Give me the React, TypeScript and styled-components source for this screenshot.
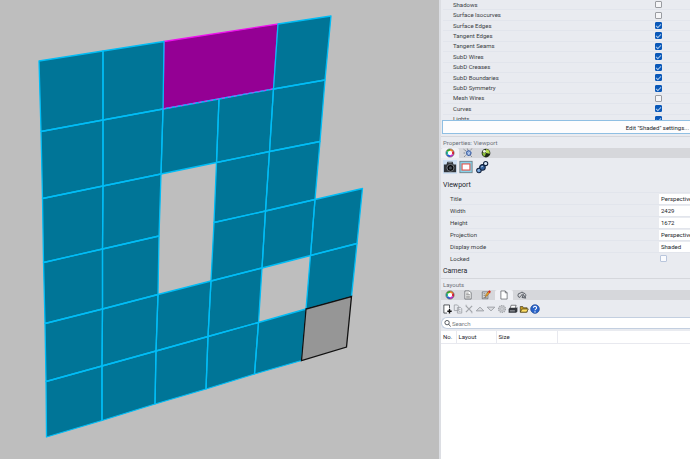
import React from "react";
import styled, { createGlobalStyle, css } from "styled-components";

const GlobalStyle = createGlobalStyle`
  * { box-sizing: border-box; }
  html, body, #root { height: 100%; }
  body { margin: 0; overflow: hidden; background: #bebebe; }
  body, button, input { font-family: Roboto, "Open Sans", sans-serif; font-size: 6px; color: #3a3d44; }
`;

const Window = styled.main`
  display: flex;
  height: 100vh;
  overflow: hidden;
`;

const Scene = styled.section`
  flex: 0 0 439px;
  overflow: hidden;
  background: #bebebe;
  svg { display: block; }
`;

const Sidebar = styled.aside`
  flex: 1;
  min-width: 0;
  display: flex;
  flex-direction: column;
  background: #e9ebf0;
  border-left: 2px solid #dcdee3;
  white-space: nowrap;
`;

const DisplayList = styled.div`
  height: 120px;
  flex: none;
  overflow: hidden;
  padding-left: 2px;
`;

const DisplayRows = styled.div`
  height: 125px;
  display: grid;
  grid-template-rows: repeat(12, 1fr);
`;

const DisplayRow = styled.label`
  display: grid;
  grid-template-columns: 202px 1fr;
  align-items: center;
  padding-left: 10px;
  min-height: 0;
  line-height: 8px;
  border-bottom: 1px solid #e2e5ec;
`;

const Check = styled.input`
  appearance: none;
  width: 7px;
  height: 7px;
  margin: 0;
  justify-self: start;
  border: 1px solid #9a9ca1;
  border-radius: 1px;
  background: #f6f6f8;
  display: grid;
  place-items: center;
  &:checked { background: #0a58b8; border-color: #0a58b8; }
  &:checked::after {
    content: "";
    width: 4px;
    height: 2px;
    border: solid #a9c8ec;
    border-width: 0 0 1px 1px;
    transform: rotate(-45deg);
  }
`;

const LockCheck = styled(Check)`
  margin-left: 1px;
  border-color: #b9c6dc;
  background: #fafbfe;
`;

const EditButton = styled.button`
  flex: none;
  height: 14px;
  margin: 0 0 2px 1px;
  padding: 0 1px 0 0;
  border: 1px solid #8fbfe3;
  border-right: 0;
  background: #fdfdfe;
  text-align: right;
  color: #22242a;
`;

const PanelTitle = styled.h2`
  flex: none;
  margin: 0;
  padding-left: 2px;
  height: 12px;
  line-height: 11px;
  font-size: 6px;
  font-weight: 400;
  color: #6c7078;
  border-top: 1px solid #d5d7dc;
`;

const TabBar = styled.div`
  flex: none;
  display: flex;
  height: 10px;
  background: #d6d7db;
`;

const Tab = styled.button<{ $active?: boolean }>`
  width: 18px;
  height: 10px;
  padding: 0;
  border: 0;
  border-radius: 2px 2px 0 0;
  background: ${(p) => (p.$active ? "#f0f1f5" : "transparent")};
  display: grid;
  place-items: center;
`;

const Tools = styled.div<{ $large?: boolean }>`
  flex: none;
  display: flex;
  align-items: center;
  height: 17px;
  ${(p) => p.$large && css`gap: 2px; padding-left: 2px; height: 18px;`}
`;

const Tool = styled.button<{ $large?: boolean; $selected?: boolean }>`
  width: ${(p) => (p.$large ? 14 : 11)}px;
  height: ${(p) => (p.$large ? 14 : 11)}px;
  padding: 0;
  border: 0;
  background: ${(p) => (p.$selected ? "#cfe0f3" : "transparent")};
  display: grid;
  place-items: center;
`;

const Section = styled.h3`
  flex: none;
  margin: 0;
  padding-left: 2px;
  height: 14px;
  line-height: 14px;
  font-size: 7px;
  font-weight: 400;
  color: #24272d;
`;

const Properties = styled.div`
  flex: none;
  height: 102px;
  display: flex;
  flex-direction: column;
  justify-content: flex-end;
`;

const Field = styled.label`
  display: grid;
  grid-template-columns: 209px 1fr;
  align-items: center;
  height: 12px;
  margin-left: 9px;
  border-top: 1px solid #e2e5ec;
`;

const ValueInput = styled.input`
  min-width: 0;
  width: 100%;
  height: 10px;
  padding: 0 0 0 2px;
  border: 0;
  background: #fff;
  color: #24272d;
`;

const Search = styled.label`
  flex: none;
  display: flex;
  align-items: center;
  height: 12px;
  padding-left: 2px;
  margin-bottom: 2px;
  background: #fff;
  border: 1px solid #c3cfe0;
  border-right: 0;
  border-radius: 6px 0 0 6px;
`;

const SearchInput = styled.input`
  flex: 1;
  min-width: 0;
  height: 9px;
  padding: 0 1px;
  border: 0;
  background: transparent;
  &::placeholder { color: #777b82; opacity: 1; }
`;

const TableArea = styled.div`
  flex: 1;
  background: #fff;
`;

const Table = styled.table`
  width: 100%;
  table-layout: fixed;
  border-collapse: collapse;
  th {
    height: 12px;
    padding: 0 0 0 2px;
    line-height: 10px;
    text-align: left;
    font-weight: 400;
    color: #24272d;
    border: solid #e8e9ef;
    border-width: 0 1px 1px 0;
  }
  th:last-child { border-right: 0; }
`;

type Point = [number, number];
const grid: Point[][] = [
  [[39, 61], [103, 51], [164, 41.5], [222, 33], [278, 24], [331, 16]],
  [[41, 131.5], [103, 120], [163, 109], [219, 99], [273.5, 89], [325, 80]],
  [[42.5, 198.5], [103, 186], [161, 174], [216.5, 162.5], [269.5, 151.5], [320, 141.5]],
  [[43.5, 262.5], [102.5, 249], [159, 236], [214, 222.5], [265.5, 211], [315, 199.5], [362.5, 188.5]],
  [[45, 323.5], [102.5, 309], [158, 294.5], [211, 281], [262, 268], [310.5, 255.5], [357, 243.5]],
  [[46, 381.5], [102, 366], [156, 351], [208, 336.5], [258.5, 322.5], [306, 309], [351.5, 296.5]],
  [[46.5, 437], [102, 420.5], [155, 404], [206, 389], [254.5, 374], [301.5, 360.5], [346.5, 347]],
];
const filled = [[0, 1, 4], [0, 1, 2, 3, 4], [0, 1, 3, 4], [0, 1, 3, 4, 5], [0, 1, 2, 3, 5], [0, 1, 2, 3, 4]];
const quad = (r: number, c: number, span = 1) =>
  [grid[r][c], grid[r][c + span], grid[r + 1][c + span], grid[r + 1][c]].map((p) => p.join(",")).join(" ");

const Facade = () => (
  <svg width="439" height="459" viewBox="0 0 439 459" role="img" aria-label="Perspective viewport">
    <polygon points={quad(0, 2, 2)} fill="#940094" stroke="#ee10ee" strokeWidth="1.3" />
    <g fill="#007597">
      {filled.flatMap((cols, r) => cols.map((c) => <polygon key={`${r}-${c}`} points={quad(r, c)} />))}
    </g>
    <g fill="none" stroke="#00bdf6" strokeWidth="1.3" strokeLinejoin="round">
      {filled.flatMap((cols, r) => cols.map((c) => <polygon key={`${r}-${c}`} points={quad(r, c)} />))}
    </g>
    <path d="M163 109L219 99L273.5 89" stroke="#c43ff0" strokeDasharray="3 3" fill="none" />
    <polygon points={quad(5, 5)} fill="#969696" stroke="#111" strokeWidth="1.3" />
  </svg>
);

const Svg = ({ size = 10, children }: { size?: number; children: React.ReactNode }) => (
  <svg width={size} height={size} viewBox="0 0 16 16" fill="none" aria-hidden="true">{children}</svg>
);

const ColorWheel = () => (
  <Svg>
    <g strokeWidth="3.2">
      <path d="M8 3A5 5 0 0 1 12.3 5.5" stroke="#f08a20" />
      <path d="M12.3 5.5A5 5 0 0 1 12.3 10.5" stroke="#e8203a" />
      <path d="M12.3 10.5A5 5 0 0 1 8 13" stroke="#c030d0" />
      <path d="M8 13A5 5 0 0 1 3.7 10.5" stroke="#2858e0" />
      <path d="M3.7 10.5A5 5 0 0 1 3.7 5.5" stroke="#18b8a0" />
      <path d="M3.7 5.5A5 5 0 0 1 8 3" stroke="#38b020" />
    </g>
    <circle cx="8" cy="8" r="6.6" stroke="#333" strokeWidth=".8" />
    <circle cx="8" cy="8" r="3.4" fill="#fff" />
  </Svg>
);
const Wireframe = () => (
  <Svg>
    <circle cx="9" cy="8" r="4.5" fill="#7e9fd6" />
    <path d="M1 2l4 3M14 1l-2 3M2 14l4-4M14 14l-3-3M7 1l1 3M1 8h3" stroke="#5f6674" strokeWidth="1.3" strokeDasharray="2 1" />
    <path d="M6 6l3-2 4 3-1 4-4 1-2-3z" stroke="#2d4c8e" strokeWidth="1.2" />
    <path d="M7 7l4 3M11 6l-3 5" stroke="#dce8fc" />
  </Svg>
);
const GreenBall = () => (
  <Svg>
    <circle cx="8" cy="8" r="7" fill="#202a18" />
    <path d="M8 2a6 6 0 0 1 6 7L8 8z" fill="#b6dc50" />
    <path d="M2.5 7L8 8l-2 5.5A6 6 0 0 1 2.5 7z" fill="#8cbf3c" />
    <circle cx="5.5" cy="5" r="2.4" fill="#eef5de" />
  </Svg>
);
const Camera = () => (
  <Svg size={14}>
    <path d="M1 5h3l1-3h6l1 3h3v9H1z" fill="#303439" />
    <circle cx="8.5" cy="9" r="4" fill="#08090b" stroke="#80868d" />
    <circle cx="8.5" cy="9" r="1.8" fill="#454c55" />
    <path d="M6 3h4" stroke="#8d9298" />
  </Svg>
);
const Frame = () => (
  <Svg size={14}>
    <rect x="1" y="1.5" width="14" height="13" fill="#87d3ea" stroke="#6f7d84" />
    <rect x="3.5" y="4.5" width="9" height="7" fill="#fff" stroke="#e4584d" strokeWidth="1.3" />
  </Svg>
);
const Chain = () => (
  <Svg size={14}>
    <path d="M4 12l8-8" stroke="#15284a" strokeWidth="3" />
    <g stroke="#10203c" strokeWidth="1.2">
      <circle cx="4.5" cy="12" r="2.6" fill="#6f9fd8" />
      <circle cx="8.5" cy="8.5" r="3.2" fill="#315f9b" />
      <circle cx="12.2" cy="4" r="2.4" fill="#dcebfa" />
    </g>
    <path d="M3.5 12l1-1M7 8l2-1" stroke="#e1efff" />
  </Svg>
);
const Page = ({ lines = false }: { lines?: boolean }) => (
  <Svg>
    <path d="M3 1.5h7l3 3v10H3z" fill="#fff" stroke="#41454c" />
    {lines ? <path d="M5 5h4M5 7.5h6M5 10h6M5 12.5h6" stroke="#555" /> : <path d="M10 1.5v3h3" stroke="#41454c" />}
  </Svg>
);
const PencilPage = () => (
  <Svg>
    <path d="M2 3h9v11H2z" fill="#ddd" stroke="#50545a" />
    <path d="M4 6h3M4 9h3M4 12h5" stroke="#555" />
    <path d="M7 11l1-4 4-5 2 2-4 5z" fill="#efa72c" stroke="#65410b" strokeWidth=".7" />
    <path d="M12 3l1-2 2 1-1 3z" fill="#d92820" stroke="#d92820" />
  </Svg>
);
const Cloud = () => (
  <Svg>
    <path d="M5 12a3.5 3.5 0 1 1 0-7 4 4 0 0 1 6 0 3.5 3.5 0 0 1 2 6" stroke="#555a62" strokeWidth="1.5" />
    <path d="M5 11l4-5M8 12l2-5 4 6z" fill="#a9adb3" stroke="#444950" strokeWidth="1.3" />
  </Svg>
);
const NewPage = () => (
  <Svg>
    <path d="M12 7V1.5H3v13h5" fill="#fff" stroke="#34373c" strokeWidth="1.3" />
    <path d="M12 8v7M8.5 11.5h7" stroke="#111" strokeWidth="2.2" />
  </Svg>
);
const CopyIcon = () => (
  <Svg>
    <path d="M2 1.5h5l2 2v7H2zM7 5.5h5l2 2v7H7z" fill="#e9ebf0" stroke="#9b9ea4" strokeWidth="1.3" />
    <path d="M9 9h3M9 12h3" stroke="#9b9ea4" />
  </Svg>
);
const Delete = () => <Svg><path d="M3 3l10 10M13 3L3 13" stroke="#a3a6ab" strokeWidth="2" /><path d="M2 2h3M11 14h3" stroke="#a3a6ab" /></Svg>;
const Up = () => <Svg><path d="M2 11l6-6 6 6z" fill="#dcdee2" stroke="#96999f" strokeWidth="1.4" /></Svg>;
const Down = () => <Svg><path d="M2 5l6 6 6-6z" fill="#dcdee2" stroke="#96999f" strokeWidth="1.4" /></Svg>;
const Gear = () => (
  <Svg>
    <circle cx="8" cy="8" r="5.5" fill="#c7c9cd" stroke="#a2a5aa" strokeWidth="2" strokeDasharray="2 1.4" />
    <circle cx="8" cy="8" r="2" fill="#e9ebf0" stroke="#a2a5aa" />
  </Svg>
);
const Printer = () => (
  <Svg>
    <path d="M5 2h8l-2 6H3z" fill="#fff" stroke="#33363b" />
    <path d="M1 8l2-2h10l2-1v7l-2 2H1z" fill="#35383e" />
    <path d="M3 11h8" stroke="#b9bdc3" strokeWidth="1.4" />
  </Svg>
);
const Folder = () => (
  <Svg>
    <path d="M2 13V4h4l1 2h6v7z" fill="#c49b21" stroke="#383015" />
    <path d="M2 13l3-5h10l-3 5z" fill="#ffdf64" stroke="#383015" />
  </Svg>
);
const Help = () => (
  <Svg>
    <circle cx="8" cy="8" r="7" fill="#2862c8" stroke="#194390" />
    <path d="M5.5 6a2.5 2.5 0 1 1 3.8 2.2Q8 9 8 10M8 11.5v2" stroke="#fff" strokeWidth="1.8" />
  </Svg>
);
const Magnifier = () => (
  <Svg size={7}>
    <circle cx="7" cy="6" r="5" stroke="#44484f" strokeWidth="2" />
    <path d="M10.5 9.5L15 15" stroke="#44484f" strokeWidth="2" />
  </Svg>
);

const displayItems: [string, boolean][] = [
  ["Shadows", false], ["Surface Isocurves", false], ["Surface Edges", true], ["Tangent Edges", true],
  ["Tangent Seams", true], ["SubD Wires", true], ["SubD Creases", true], ["SubD Boundaries", true],
  ["SubD Symmetry", true], ["Mesh Wires", false], ["Curves", true], ["Lights", true],
];
const fields = [["Title", "Perspective"], ["Width", "2429"], ["Height", "1672"], ["Projection", "Perspective"], ["Display mode", "Shaded"]];

export default function App() {
  return (
    <>
      <GlobalStyle />
      <Window>
        <Scene><Facade /></Scene>
        <Sidebar>
          <DisplayList>
            <DisplayRows>
              {displayItems.map(([name, on]) => (
                <DisplayRow key={name}><span>{name}</span><Check type="checkbox" defaultChecked={on} /></DisplayRow>
              ))}
            </DisplayRows>
          </DisplayList>
          <EditButton>Edit "Shaded" settings...</EditButton>
          <PanelTitle>Properties: Viewport</PanelTitle>
          <TabBar>
            <Tab $active aria-label="Properties"><ColorWheel /></Tab>
            <Tab aria-label="Display"><Wireframe /></Tab>
            <Tab aria-label="Rendering"><GreenBall /></Tab>
          </TabBar>
          <Tools $large>
            <Tool $large $selected aria-label="Camera"><Camera /></Tool>
            <Tool $large aria-label="Viewport frame"><Frame /></Tool>
            <Tool $large aria-label="Links"><Chain /></Tool>
          </Tools>
          <Properties>
            <Section>Viewport</Section>
            {fields.map(([name, value]) => (
              <Field key={name}><span>{name}</span><ValueInput defaultValue={value} /></Field>
            ))}
            <Field><span>Locked</span><LockCheck type="checkbox" /></Field>
            <Section>Camera</Section>
          </Properties>
          <PanelTitle>Layouts</PanelTitle>
          <TabBar>
            <Tab aria-label="Properties"><ColorWheel /></Tab>
            <Tab aria-label="Notes"><Page lines /></Tab>
            <Tab aria-label="Edit notes"><PencilPage /></Tab>
            <Tab $active aria-label="Layouts"><Page /></Tab>
            <Tab aria-label="Environment"><Cloud /></Tab>
          </TabBar>
          <Tools>
            <Tool aria-label="New layout"><NewPage /></Tool>
            <Tool aria-label="Copy"><CopyIcon /></Tool>
            <Tool aria-label="Delete"><Delete /></Tool>
            <Tool aria-label="Move up"><Up /></Tool>
            <Tool aria-label="Move down"><Down /></Tool>
            <Tool aria-label="Settings"><Gear /></Tool>
            <Tool aria-label="Print"><Printer /></Tool>
            <Tool aria-label="Open"><Folder /></Tool>
            <Tool aria-label="Help"><Help /></Tool>
          </Tools>
          <Search><Magnifier /><SearchInput placeholder="Search" aria-label="Search" /></Search>
          <TableArea>
            <Table>
              <colgroup><col width="15" /><col width="40" /><col width="61" /><col /></colgroup>
              <thead><tr><th>No.</th><th>Layout</th><th>Size</th><th aria-label="Details" /></tr></thead>
            </Table>
          </TableArea>
        </Sidebar>
      </Window>
    </>
  );
}
